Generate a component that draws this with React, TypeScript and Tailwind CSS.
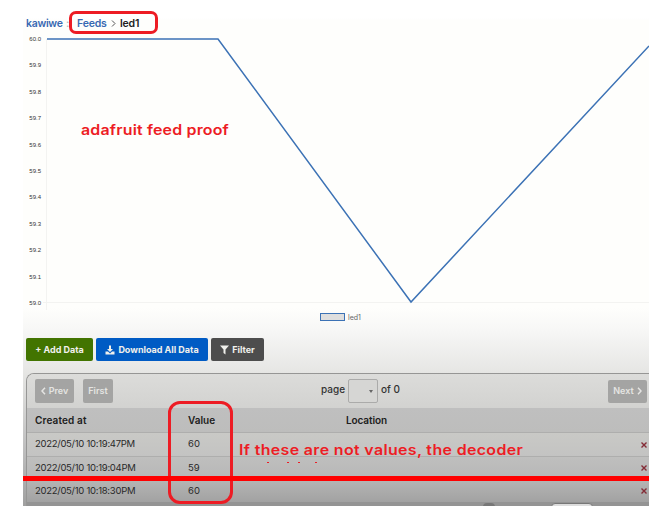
import React from "react";

const ticks = ["60.0", "59.9", "59.8", "59.7", "59.6", "59.5", "59.4", "59.3", "59.2", "59.1", "59.0"];

const rows = [
  { date: "2022/05/10 10:19:47PM", value: "60", style: "h-6 bg-linear-to-b from-[#c9c9c6] to-[#c3c3c2]" },
  { date: "2022/05/10 10:19:04PM", value: "59", style: "h-[23px] bg-linear-to-b from-[#bfbfbe] to-[#b7b7b7]" },
  { date: "2022/05/10 10:18:30PM", value: "60", style: "h-[23px] bg-linear-to-b from-[#b5b5b4] to-[#a2a2a2]" },
];

function Chart() {
  return (
    <div className="flex h-[276px] pt-px">
      <div className="flex w-[18px] flex-col text-right font-['Liberation_Sans'] text-[6px] leading-[26.4px] text-[#333]">
        {ticks.map((t) => (
          <span key={t} className="-mt-[9px] mb-[9px] h-[26.4px] shrink-0">{t}</span>
        ))}
      </div>
      <svg width="608" height="276" viewBox="0 0 608 276" className="-mt-px shrink-0" fill="none">
        <path d="M5.5 5V277M2 268.5H608" stroke="#f3f3f1" />
        <path d="M6 5H177L370 268L608 12" stroke="#3c72b5" strokeWidth="1.5" />
      </svg>
    </div>
  );
}

function Toolbar() {
  return (
    <div className="flex h-[23px] gap-[3px] pl-[3px] text-[9px] font-bold text-[#f0f0ec]">
      <button className="flex w-[67px] items-center justify-center rounded-[2px] bg-[#427400]">
        <span>+ Add Data</span>
      </button>
      <button className="flex w-[112px] items-center justify-center gap-[3px] rounded-[2px] bg-[#005bc4]">
        <svg width="10" height="10" viewBox="0 0 20 20" fill="currentColor">
          <path d="M8 1h4v7h4l-6 6-6-6h4zM1 13h5l4 4 4-4h5v6H1z" />
        </svg>
        <span>Download All Data</span>
      </button>
      <button className="flex w-[53px] items-center justify-center gap-[3px] rounded-[2px] bg-[#4d4d4d]">
        <svg width="9" height="10" viewBox="0 0 18 20" fill="currentColor">
          <path d="M0 1h18l-7 8v10l-4-3V9z" />
        </svg>
        <span>Filter</span>
      </button>
    </div>
  );
}

function Pager() {
  return (
    <div className="flex h-[34px] items-center bg-linear-to-b from-[#dcdcda] to-[#d2d2d0] pl-2 text-[9px] font-semibold text-[#e4e4e2]">
      <button className="flex h-6 w-[39px] items-center justify-center gap-[3px] rounded-[2px] bg-[#a4a4a3]">
        <svg width="5" height="8" viewBox="0 0 5 8" fill="none" stroke="currentColor" strokeWidth="1.5"><path d="M4 .7L1 4l3 3.3" /></svg>
        Prev
      </button>
      <button className="ml-[9px] flex h-6 w-[30px] items-center justify-center rounded-[2px] bg-[#a4a4a3]">First</button>
      <div className="ml-[208px] flex h-6 items-center text-[10px] font-medium text-[#333]">
        <span className="w-[27px] -translate-y-0.5">page</span>
        <span className="flex h-6 w-[30px] items-center justify-end rounded-[2px] border border-[#ababaa] bg-[#d6d6d4] pr-1">
          <svg width="4" height="3" viewBox="0 0 4 3"><path d="M0 0h4L2 3z" fill="#666" /></svg>
        </span>
        <span className="ml-[3px] -translate-y-0.5 whitespace-nowrap">of 0</span>
      </div>
      <button className="mr-[2px] ml-auto flex h-[23px] w-[39px] items-center justify-center gap-[3px] rounded-[2px] bg-[#a4a4a3]">
        Next
        <svg width="5" height="8" viewBox="0 0 5 8" fill="none" stroke="currentColor" strokeWidth="1.5"><path d="M1 .7L4 4 1 7.3" /></svg>
      </button>
    </div>
  );
}

function DataTable() {
  return (
    <div className="ml-[3px] h-[133px] overflow-hidden rounded-tl-[8px] border-t border-l border-[#969695]">
      <Pager />
      <div className="flex h-6 items-center bg-linear-to-b from-[#bfbfbf] to-[#bdbdbc] pl-2 text-[10px] font-semibold text-[#202020]">
        <span className="w-[153px] tracking-[0.13px]">Created at</span>
        <span className="w-[158px]">Value</span>
        <span className="tracking-[-0.1px]">Location</span>
      </div>
      {rows.map((r) => (
        <div key={r.date} className={`flex items-center border-t border-[#aeaead] pl-2 text-[9.5px] text-[#292929] ${r.style}`}>
          <span className="w-[153px] tracking-[-0.28px]">{r.date}</span>
          <span>{r.value}</span>
          <svg className="mr-[2px] ml-auto" width="6" height="6" viewBox="0 0 6 6" stroke="#842b36" strokeWidth="1.4"><path d="M.5.5l5 5m0-5l-5 5" /></svg>
        </div>
      ))}
      <div className="flex h-1.5 justify-end bg-[#949494] pt-px">
        <span className="h-1.5 w-3 rounded-t bg-[#777]" />
        <span className="mr-[56px] ml-[56px] h-1.5 w-[42px] rounded-t border border-[#777] bg-[#ddd]" />
      </div>
    </div>
  );
}

function Annotations() {
  return (
    <div className="pointer-events-none absolute inset-0 font-semibold text-[#ed1c24]">
      <div className="absolute top-[11px] left-[69px] h-[23px] w-[89px] rounded-[7px] border-[3px] border-[#ed1c24]" />
      <div className="absolute top-[401px] left-[168px] h-[103px] w-[65px] rounded-[12px] border-[3px] border-[#ed1c24]" />
      <div className="absolute top-[120px] left-[81px] origin-left scale-x-[1.14] text-[14px] leading-5 tracking-[0.15px] whitespace-nowrap">adafruit feed proof</div>
      <div className="absolute top-[440px] left-[239px] origin-left scale-x-[1.14] text-[14px] leading-5 tracking-[0.3px] whitespace-nowrap">If these are not values, the decoder</div>
      <div className="absolute top-[462px] left-[267px] flex gap-[9px]">
        <i className="mr-[9px] h-px w-0.5 bg-[#ed1c24]" />
        <i className="h-px w-0.5 bg-[#ed1c24]" />
        <i className="mr-[6px] h-px w-0.5 bg-[#ed1c24]" />
        <i className="h-px w-0.5 bg-[#ed1c24]" />
      </div>
      <div className="absolute top-[476px] left-[23px] h-[5px] w-[626px] bg-[#ff0000]" />
    </div>
  );
}

export default function App() {
  return (
    <div className="relative h-[517px] w-[665px] overflow-hidden bg-white font-['Inter',sans-serif]">
      <main className="mt-0 ml-[23px] flex h-[506px] w-[626px] flex-col overflow-hidden bg-[linear-gradient(to_bottom,#fff_18px,#fefefc_20px,#fefefc_308px,#f7f7f6_330px,#e6e6e4_372px,#c3c3c3_440px,#a0a0a0_506px)]">
        <nav className="mt-[14px] mb-px flex h-[19px] items-center pl-[3px] text-[10.5px] font-semibold text-[#3869b2]">
          <a className="w-[40px] tracking-[-0.3px]">kawiwe</a>
          <span className="w-[11px] text-[#bbb]">:</span>
          <a className="w-[34px] tracking-[-0.2px]">Feeds</a>
          <svg className="mr-1" width="5" height="7" viewBox="0 0 5 7" fill="none" stroke="#555"><path d="M1 .5l3 3-3 3" /></svg>
          <span className="tracking-[-0.2px] text-[#222]">led1</span>
        </nav>
        <Chart />
        <div className="mt-[2px] flex h-[10px] items-center gap-[3px] pl-[297px] text-[7px] text-[#666]">
          <span className="h-2 w-[25px] border border-[#3c72b5] bg-[#dedede]" />
          <span className="leading-none">led1</span>
        </div>
        <div className="mt-4"><Toolbar /></div>
        <div className="mt-3"><DataTable /></div>
      </main>
      <Annotations />
    </div>
  );
}
